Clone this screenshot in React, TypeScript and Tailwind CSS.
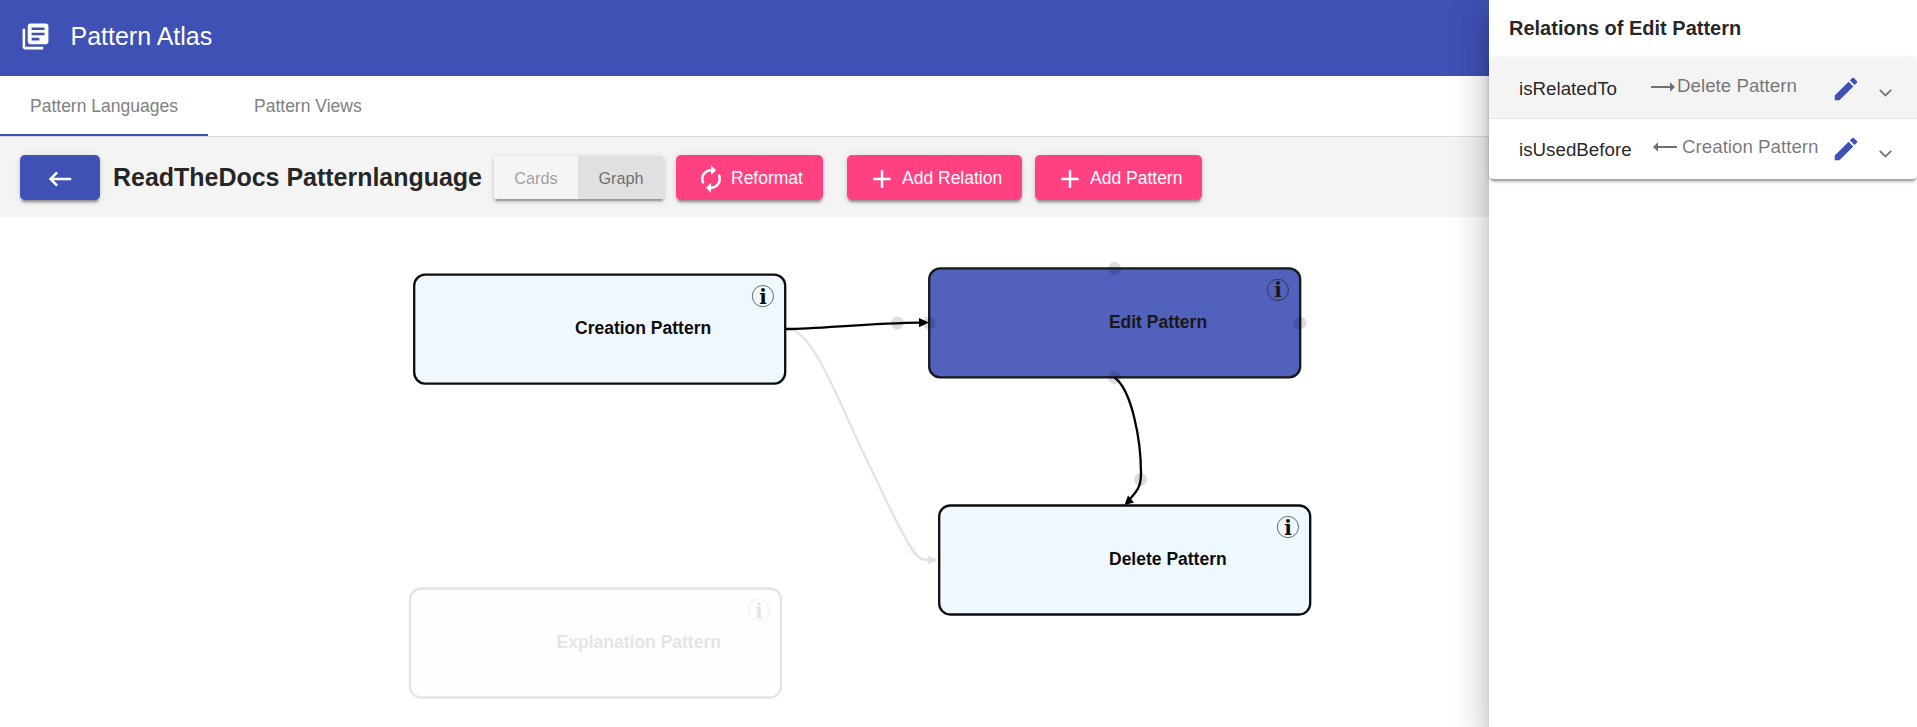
import { MdAdd, MdAutorenew, MdEdit, MdKeyboardBackspace, MdLibraryBooks } from 'react-icons/md';

const RAISED =
  'shadow-[0_3.75px_1.25px_-2.5px_rgba(0,0,0,0.2),0_2.5px_2.5px_0_rgba(0,0,0,0.14),0_1.25px_6.25px_0_rgba(0,0,0,0.12)]';

function AccentButton({ icon, label, className }: { icon: React.ReactNode; label: string; className: string }) {
  return (
    <button
      className={`flex h-[45px] shrink-0 items-center rounded-[5px] bg-[#ff4081] pl-5 text-[17.5px] whitespace-nowrap text-white ${RAISED} ${className}`}
    >
      {icon}
      <span className="ml-[5px] h-[45px] leading-[46px]">{label}</span>
    </button>
  );
}

type NodeProps = {
  x: number;
  y: number;
  label: string;
  labelX: number;
  labelY: number;
  fill?: string;
  opacity?: number;
};

function PatternNode({ x, y, label, labelX, labelY, fill = '#f0f8ff', opacity = 1 }: NodeProps) {
  return (
    <g opacity={opacity}>
      <rect x={x} y={y} width="371" height="109" rx="11" fill={fill} stroke="#000" strokeWidth="2.3" />
      <text x={labelX} y={labelY} fontSize="17.5" fontWeight="700">
        {label}
      </text>
      <circle cx={x + 348.7} cy={y + 21.5} r="10.6" fill="none" stroke="#000" strokeWidth="0.6" />
      <text
        x={x + 348.9}
        y={y + 29}
        fontSize="20"
        fontWeight="700"
        textAnchor="middle"
        fontFamily="'DejaVu Serif', serif"
      >
        i
      </text>
    </g>
  );
}

function Graph() {
  return (
    <svg className="block h-[510px] w-[1489px]" viewBox="0 217 1489 510" fontFamily="'Liberation Sans', Arial, sans-serif">
      <g opacity="0.11">
        <path
          d="M786 329 C812 326 840 405 862 450 C878 482 900 533 914 552 C919 559 922 560 930 560"
          fill="none"
          stroke="#000"
          strokeWidth="2.3"
        />
        <path d="M928 555.5 L938 560 L928 564.5 Z" />
        <circle cx="911" cy="549.5" r="6.4" fillOpacity="0.13" />
      </g>
      <PatternNode x={414.2} y={274.6} label="Creation Pattern" labelX={575} labelY={334} opacity={0.95} />
      <PatternNode x={410} y={588.5} label="Explanation Pattern" labelX={556.6} labelY={648} opacity={0.1} />
      <PatternNode x={929.2} y={268.4} label="Edit Pattern" labelX={1108.9} labelY={328} fill="#3f51b5" opacity={0.9} />
      <PatternNode x={939.2} y={505.5} label="Delete Pattern" labelX={1109} labelY={565} opacity={0.95} />
      <path d="M786 329 C815 329.3 870 323 920 322.6" fill="none" stroke="#000" strokeWidth="2.3" />
      <path d="M919 318 L929 322.6 L919 327.2 Z" />
      <path
        d="M1114.5 377.5 C1132 390 1141 441 1141 473 C1141 487 1137 491 1130 499"
        fill="none"
        stroke="#000"
        strokeWidth="2.3"
      />
      <path d="M1124.5 505 L1128 495.5 L1134 502.5 Z" />
      <g fillOpacity="0.14">
        <circle cx="897.5" cy="323" r="6.4" />
        <circle cx="929.3" cy="323" r="6.4" />
        <circle cx="1114.5" cy="268.5" r="6.4" />
        <circle cx="1114.5" cy="377.5" r="6.4" />
        <circle cx="1300" cy="323" r="6.4" />
        <circle cx="1140.6" cy="479.5" r="6.4" />
      </g>
    </svg>
  );
}

function LongArrow({ left = false }: { left?: boolean }) {
  return (
    <svg className="h-[10px] w-6 shrink-0" viewBox="0 0 24 10" fill="#707070">
      <path d={left ? 'M5 0.3 L0 5 L5 9.7 V6 H24 V4 H5 Z' : 'M19 0.3 L24 5 L19 9.7 V6 H0 V4 H19 Z'} />
    </svg>
  );
}

function RelationRow({ name, target, left = false }: { name: string; target: string; left?: boolean }) {
  return (
    <div
      className={`flex items-center pl-[30px] text-[18.75px] ${left ? 'h-[60px] bg-white pb-px' : 'h-[61px] border-b border-[#e8e8e8] bg-[#f4f4f4]'}`}
    >
      <span className={`mt-[3px] text-black/87 ${left ? 'w-[134px]' : 'w-[132px]'}`}>{name}</span>
      <span className="mb-[3px] flex flex-1 items-center whitespace-nowrap text-black/54">
        <LongArrow left={left} />
        <span className={left ? 'ml-[5px]' : 'ml-[2px]'}>{target}</span>
      </span>
      <MdEdit className="mt-px mr-[18px] size-[30px] text-[#3f51b5]" />
      <svg className="mt-[10px] mr-[25px] h-[8px] w-[13px]" viewBox="0 0 13 8" fill="none" stroke="#757575" strokeWidth="1.8">
        <path d="M0.8 0.8 L6.5 6.5 L12.2 0.8" />
      </svg>
    </div>
  );
}

export default function App() {
  return (
    <div className="relative h-[727px] w-[1917px] overflow-hidden bg-white font-['Liberation_Sans',Arial,sans-serif] text-black/87">
      <header className="flex h-[76px] items-center bg-[#3f51b5] pl-5 text-white">
        <MdLibraryBooks className="mb-1 size-[31px]" />
        <h1 className="mb-[3px] ml-[19.5px] text-[25px]">Pattern Atlas</h1>
      </header>

      <nav className="flex h-[61px] border-b border-[#dcdcdc] text-[17.5px] text-[#808080]">
        <a className="h-[60px] w-[208px] border-b-2 border-[#3f51b5] pl-[30px] leading-[60px]">Pattern Languages</a>
        <a className="pl-[46px] leading-[60px]">Pattern Views</a>
      </nav>

      <div className="flex h-20 items-center bg-[#f4f4f4] pl-5">
        <button className={`flex h-[45px] w-20 items-center justify-center rounded-[5px] bg-[#3f51b5] text-white ${RAISED}`}>
          <MdKeyboardBackspace className="mt-[3px] size-[30px]" />
        </button>
        <h2 className="mt-[2px] ml-[13px] w-[381px] text-[25px] font-bold tracking-[-0.02px] whitespace-nowrap">
          ReadTheDocs Patternlanguage
        </h2>
        <div className={`flex h-[43px] w-[170px] overflow-hidden rounded-[3px] text-[16.25px] leading-[45px] ${RAISED}`}>
          <span className="w-[84px] bg-[#f5f5f5] text-center text-black/38">Cards</span>
          <span className="flex-1 bg-[#e0e0e0] text-center text-black/54">Graph</span>
        </div>
        <AccentButton className="ml-3 w-[147px]" icon={<MdAutorenew className="mt-[3px] size-[30px]" />} label="Reformat" />
        <AccentButton className="ml-6 w-[175px]" icon={<MdAdd className="mt-[3px] size-[30px]" />} label="Add Relation" />
        <AccentButton className="ml-[13px] w-[167px]" icon={<MdAdd className="mt-[3px] size-[30px]" />} label="Add Pattern" />
      </div>

      <Graph />

      <aside className="absolute inset-y-0 right-0 w-[428px] bg-white shadow-[0_10px_12.5px_-6.25px_rgba(0,0,0,0.2),0_20px_30px_2.5px_rgba(0,0,0,0.14),0_7.5px_37.5px_6.25px_rgba(0,0,0,0.12)]">
        <h3 className="h-[58px] pl-5 text-[20px] leading-[56px] font-bold">Relations of Edit Pattern</h3>
        <div className={`flex flex-col overflow-hidden rounded-[5px] ${RAISED}`}>
          <RelationRow name="isRelatedTo" target="Delete Pattern" />
          <RelationRow name="isUsedBefore" target="Creation Pattern" left />
        </div>
      </aside>
    </div>
  );
}
